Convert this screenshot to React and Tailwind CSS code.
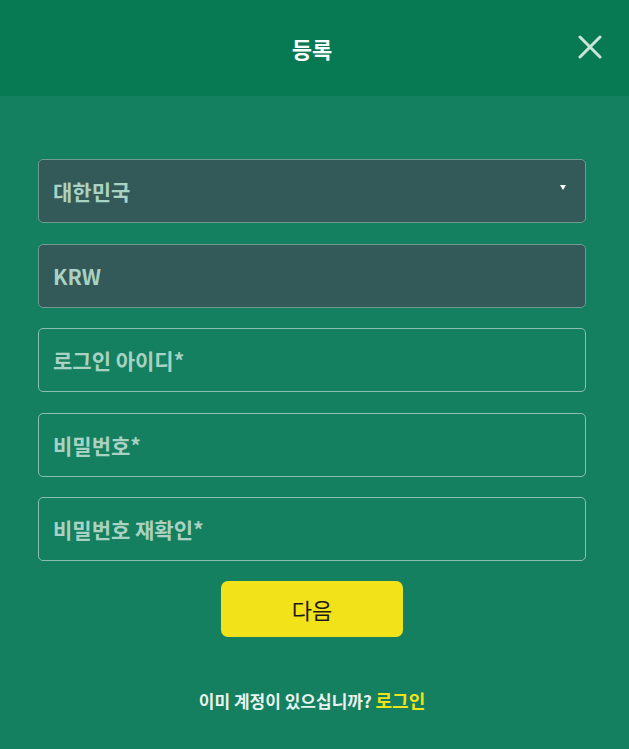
import React from 'react';

const font = { fontFamily: '"Noto Sans CJK KR", "Noto Sans", sans-serif' };

function Field({ label, filled, select }) {
  return (
    <div
      className={
        'relative flex h-[64px] items-center rounded-[5px] border px-[14px] ' +
        (filled ? 'border-[#6f9c90] bg-[#335959]' : 'border-[#8cbfae] bg-transparent')
      }
    >
      <span className="pt-[2px] text-[21px] font-bold text-[#a9d2c3]">{label}</span>
      {select && (
        <span className="absolute right-[19px] top-[25px] h-0 w-0 border-x-[3px] border-t-[5px] border-x-transparent border-t-white" />
      )}
    </div>
  );
}

export default function App() {
  return (
    <div className="flex min-h-[749px] w-full flex-col bg-[#14805f]" style={font}>
      <header className="relative flex h-[96px] items-center justify-center bg-[#077a54] pr-[5px]">
        <h1 className="text-[22px] font-bold text-white">등록</h1>
        <button className="absolute right-[27px] top-[35px] text-[#c9e6d9]">
          <svg width="24" height="24" viewBox="0 0 24 24" fill="none" stroke="currentColor" strokeWidth="3" strokeLinecap="round">
            <path d="M2 2L22 22M22 2L2 22" />
          </svg>
        </button>
      </header>

      <main className="flex flex-col pl-[38px] pr-[43px] pt-[63px]">
        <div className="flex flex-col gap-[20.5px]">
          <Field label="대한민국" filled select />
          <Field label="KRW" filled />
          <Field label="로그인 아이디*" />
          <Field label="비밀번호*" />
          <Field label="비밀번호 재확인*" />
        </div>

        <div className="mt-[20px] flex justify-center">
          <button className="h-[56px] w-[182px] rounded-[7px] bg-[#f2e21a] text-[22px] text-[#1a1a1a]">다음</button>
        </div>

        <p className="mt-[50px] text-center text-[17px] font-bold text-[#e8f3ee]">
          이미 계정이 있으십니까? <span className="text-[18px] text-[#f2e21a]">로그인</span>
        </p>
      </main>
    </div>
  );
}
